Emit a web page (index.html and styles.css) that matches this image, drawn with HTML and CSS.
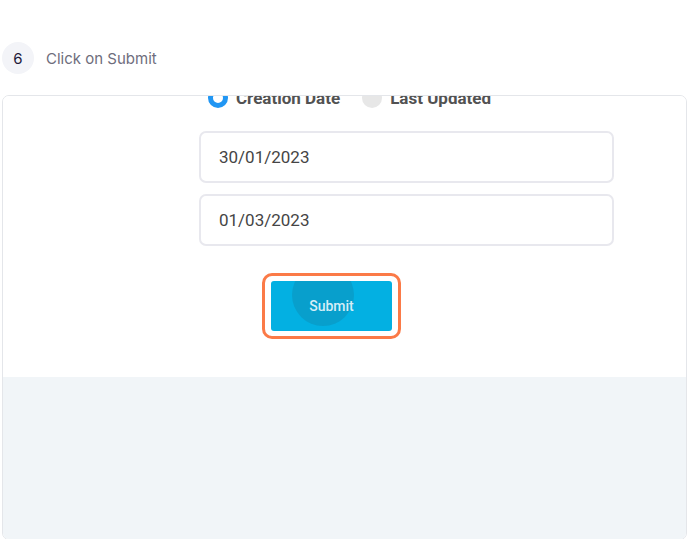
FILE: index.html
```html
<!DOCTYPE html>
<html lang="en">
<head>
  <meta charset="UTF-8" />
  <meta name="viewport" content="width=device-width, initial-scale=1.0"/>
  <title>Click on Submit</title>
  <link rel="stylesheet" href="styles.css">
</head>
<body>
  <div class="step">
    <div class="step-num">6</div>
    <div class="step-text">Click on Submit</div>
  </div>

  <div class="card">
    <div class="shot">
      <div class="radio-row">
        <span class="radio checked"></span>
        <span class="radio-label">Creation Date</span>
        <span class="radio"></span>
        <span class="radio-label">Last Updated</span>
      </div>
      <div class="date-field">30/01/2023</div>
      <div class="date-field">01/03/2023</div>
      <div class="highlight">
        <button class="submit-btn">
          <span class="ripple"></span>
          <span class="btn-text">Submit</span>
        </button>
      </div>
    </div>
    <div class="shot-foot"></div>
  </div>
</body>
</html>
```

FILE: styles.css
```css
body {
  margin: 0;
  background: #ffffff;
  font-family: "Inter", "Open Sans", sans-serif;
}
.step {
  display: flex;
  align-items: center;
  padding: 42px 0 0 2px;
}
.step-num {
  width: 32px;
  height: 32px;
  border-radius: 50%;
  background: #f3f4f8;
  color: #1e1b3a;
  font-size: 15px;
  display: flex;
  align-items: center;
  justify-content: center;
}
.step-text {
  margin-left: 12px;
  font-size: 15px;
  color: #6e6d7c;
}
.card {
  margin: 21px 2px 0 2px;
  height: 443px;
  border: 1px solid #e4e6ea;
  border-radius: 7px;
  overflow: hidden;
  display: flex;
  flex-direction: column;
}
.shot {
  background: #ffffff;
  height: 281px;
  padding-left: 196px;
  font-family: "Roboto", sans-serif;
}
.radio-row {
  display: flex;
  align-items: center;
  margin-top: -9px;
  margin-left: 9px;
  height: 22px;
}
.radio {
  width: 20px;
  height: 20px;
  border-radius: 50%;
  background: #e7e7e7;
  box-sizing: border-box;
}
.radio.checked {
  background: #ffffff;
  border: 5px solid #2196f3;
}
.radio-label {
  font-size: 17px;
  font-weight: bold;
  color: #525252;
  margin: 0 22px 0 8px;
}
.date-field {
  width: 415px;
  height: 52px;
  box-sizing: border-box;
  border: 2px solid #e8e8ee;
  border-radius: 7px;
  padding-left: 18px;
  display: flex;
  align-items: center;
  font-size: 17px;
  color: #454545;
}
.radio-row + .date-field {
  margin-top: 22px;
}
.date-field + .date-field {
  margin-top: 11px;
}
.highlight {
  margin: 27px 0 0 63px;
  width: 121px;
  padding: 5px 6px;
  border: 3px solid #fb7a47;
  border-radius: 10px;
}
.submit-btn {
  position: relative;
  overflow: hidden;
  width: 121px;
  height: 50px;
  border: none;
  border-radius: 3px;
  background: #03b0e2;
  padding: 0;
  display: flex;
  align-items: center;
  justify-content: center;
  font-family: "Roboto", sans-serif;
}
.ripple {
  position: absolute;
  left: 21px;
  top: -17px;
  width: 62px;
  height: 62px;
  border-radius: 50%;
  background: #089fcc;
}
.btn-text {
  position: relative;
  color: #d5eef7;
  font-size: 14px;
  font-weight: 500;
}
.shot-foot {
  flex: 1;
  background: #f1f5f8;
}
```
